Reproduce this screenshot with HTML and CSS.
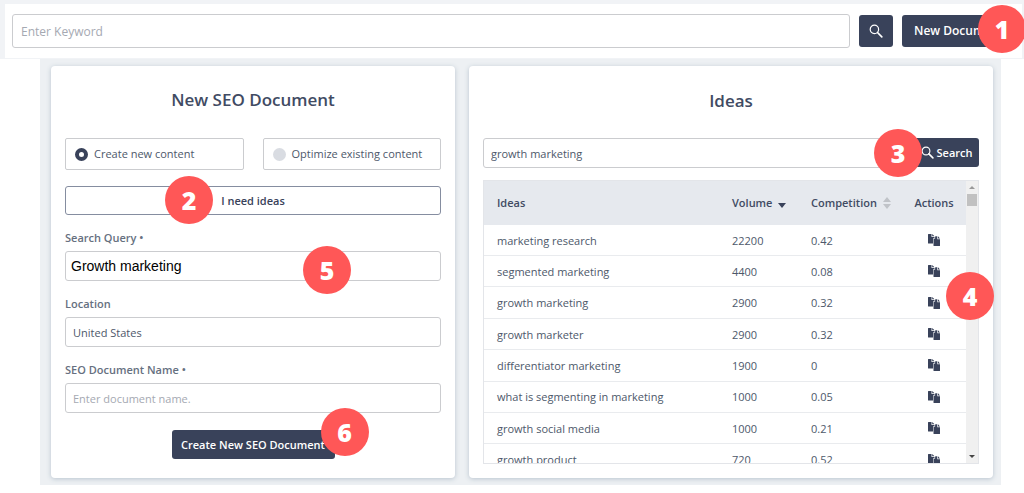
FILE: index.html
```html
<!DOCTYPE html>
<html lang="en">
<head>
<meta charset="utf-8">
<title>New SEO Document</title>
<link rel="stylesheet" href="styles.css">
</head>
<body>
<svg class="defs" width="0" height="0" aria-hidden="true">
  <symbol id="search" viewBox="0 0 14 14"><circle cx="5.4" cy="5.4" r="4.2" fill="none" stroke="currentColor" stroke-width="1.2"/><path d="M8.500 8.500l4.300 4.300" fill="none" stroke="currentColor" stroke-width="1.7" stroke-linecap="round"/></symbol>
  <symbol id="copy" viewBox="0 0 12 12"><path fill="currentColor" d="M0 .5Q0 0 .5 0H3.500V3H6.500V4.200H5.500Q5 4.200 5 4.700V9.500H.5Q0 9.500 0 9zM4.200 0l2.300 2.300H4.200zM5.500 5.300Q5.500 4.800 6 4.800H7.100V2.800Q7.100 2.300 7.600 2.300H9.300V5.200H12V11.500Q12 12 11.500 12H6Q5.500 12 5.500 11.500zM10 2.300L12 4.500H10z"/></symbol>
</svg>

<header class="topbar">
  <form class="topbar-inner">
    <input class="field keyword" type="text" placeholder="Enter Keyword" aria-label="Enter Keyword">
    <button class="btn icon-btn" type="button" aria-label="Search"><svg width="14" height="14"><use href="#search"/></svg></button>
    <div class="anchor">
      <button class="btn new-doc" type="button">New Document</button>
      <span class="badge badge-new">1</span>
    </div>
  </form>
</header>

<main class="stage">
  <section class="card card-form">
    <h1 class="title">New SEO Document</h1>
    <form class="form">
      <div class="choices">
        <label class="choice"><input class="radio" type="radio" name="mode" checked>Create new content</label>
        <label class="choice"><input class="radio" type="radio" name="mode">Optimize existing content</label>
      </div>
      <div class="anchor ideas-line">
        <button class="outline-btn" type="button">I need ideas</button>
        <span class="badge badge-ideas">2</span>
      </div>
      <div class="group anchor">
        <label class="label" for="query">Search Query •</label>
        <input class="field query" id="query" type="text" value="Growth marketing">
        <span class="badge badge-query">5</span>
      </div>
      <div class="group">
        <label class="label" for="location">Location</label>
        <input class="field" id="location" type="text" value="United States">
      </div>
      <div class="group">
        <label class="label" for="docname">SEO Document Name •</label>
        <input class="field" id="docname" type="text" placeholder="Enter document name.">
      </div>
      <div class="anchor submit">
        <button class="btn create" type="button">Create New SEO Document</button>
        <span class="badge badge-create">6</span>
      </div>
    </form>
  </section>

  <section class="card card-ideas">
    <h2 class="title">Ideas</h2>
    <form class="search-row">
      <input class="field idea-input" type="text" value="growth marketing" aria-label="Idea keyword">
      <div class="anchor">
        <button class="btn search-btn" type="button"><svg width="13" height="13"><use href="#search"/></svg>Search</button>
        <span class="badge badge-search">3</span>
      </div>
    </form>
    <div class="anchor">
      <div class="table-box">
        <table class="ideas">
          <thead>
            <tr><th class="c-idea">Ideas</th><th class="c-vol">Volume <svg class="sort" width="8" height="5"><path d="M0 0h8L4 5z" fill="#39425a"/></svg></th><th class="c-comp">Competition <svg class="sort-both" width="8" height="12"><path d="M0 5h8L4 0zM0 7h8l-4 5z" fill="#c0c3c8"/></svg></th><th class="c-act">Actions</th></tr>
          </thead>
          <tbody>
            <tr><td>marketing research</td><td>22200</td><td>0.42</td><td class="act"><button class="copy" type="button" aria-label="Copy"><svg width="12" height="12"><use href="#copy"/></svg></button></td></tr>
            <tr><td>segmented marketing</td><td>4400</td><td>0.08</td><td class="act"><button class="copy" type="button" aria-label="Copy"><svg width="12" height="12"><use href="#copy"/></svg></button></td></tr>
            <tr><td>growth marketing</td><td>2900</td><td>0.32</td><td class="act"><button class="copy" type="button" aria-label="Copy"><svg width="12" height="12"><use href="#copy"/></svg></button></td></tr>
            <tr><td>growth marketer</td><td>2900</td><td>0.32</td><td class="act"><button class="copy" type="button" aria-label="Copy"><svg width="12" height="12"><use href="#copy"/></svg></button></td></tr>
            <tr><td>differentiator marketing</td><td>1900</td><td>0</td><td class="act"><button class="copy" type="button" aria-label="Copy"><svg width="12" height="12"><use href="#copy"/></svg></button></td></tr>
            <tr><td>what is segmenting in marketing</td><td>1000</td><td>0.05</td><td class="act"><button class="copy" type="button" aria-label="Copy"><svg width="12" height="12"><use href="#copy"/></svg></button></td></tr>
            <tr><td>growth social media</td><td>1000</td><td>0.21</td><td class="act"><button class="copy" type="button" aria-label="Copy"><svg width="12" height="12"><use href="#copy"/></svg></button></td></tr>
            <tr><td>growth product</td><td>720</td><td>0.52</td><td class="act"><button class="copy" type="button" aria-label="Copy"><svg width="12" height="12"><use href="#copy"/></svg></button></td></tr>
          </tbody>
        </table>
        <div class="scrollbar" aria-hidden="true">
          <svg width="6" height="3"><path d="M0 3h6L3 0z" fill="#999"/></svg>
          <span class="thumb"></span>
          <svg class="down" width="6" height="3"><path d="M0 0h6L3 3z" fill="#444"/></svg>
        </div>
      </div>
      <span class="badge badge-table">4</span>
    </div>
  </section>
</main>
</body>
</html>
```
FILE: styles.css
```css
* { box-sizing: border-box; }

body {
  margin: 0;
  background: #fff;
  color: #4d586a;
  font: 11px/16px "Open Sans", "Noto Sans", sans-serif;
  overflow-x: hidden;
}

.defs { position: absolute; }

input, button { font: inherit; margin: 0; }
h1, h2 { margin: 0; }
svg { display: block; flex: none; }

.topbar {
  background: #f1f3f6;
  padding: 4px 2px 1px 5px;
}

.topbar-inner {
  display: flex;
  align-items: center;
  gap: 9px;
  padding: 10px 5px 10px 7px;
  background: #fff;
}

.anchor { position: relative; }

.field {
  width: 100%;
  min-width: 0;
  height: 30px;
  padding: 0 7px;
  border: 1px solid #cbcccf;
  border-radius: 3px;
  background: #fff;
  color: #4d586a;
  outline: 0;
}

.field::placeholder { color: #a5a9b2; opacity: 1; }

.keyword { flex: 1; height: 34px; padding: 0 8px; font-size: 12px; }

.btn {
  display: flex;
  align-items: center;
  justify-content: center;
  border: 0;
  border-radius: 3px;
  background: #39425a;
  color: #fff;
  font-weight: 600;
  white-space: nowrap;
}

.icon-btn { width: 34px; height: 32px; padding: 0; }
.new-doc { width: 115px; height: 32px; padding: 0 12px; font-size: 12px; justify-content: flex-start; }

.badge {
  position: absolute;
  z-index: 2;
  display: grid;
  place-items: center;
  width: 48px;
  height: 48px;
  border-radius: 50%;
  background: #ff5757;
  color: #fff;
  font-size: 25px;
  font-weight: 800;
  line-height: 48px;
}

.badge-new { right: -9px; top: -10px; }
.badge-ideas { left: 100px; top: -10px; }
.badge-query { left: 238px; top: 17px; }
.badge-create { right: -34px; top: -22px; }
.badge-search { right: 57px; top: -9px; }
.badge-table { right: -15px; top: 92px; }

.stage {
  display: grid;
  grid-template-columns: minmax(0, 404fr) minmax(0, 524fr);
  gap: 14px;
  margin: 0 23px 8px 40px;
  padding: 7px 8px 7px 11px;
  background: #edf0f3;
}

.card {
  padding: 24px 14px 14px;
  border-radius: 4px;
  background: #fff;
  box-shadow: 0 1px 5px #b9c4cf;
}

.title {
  height: 48px;
  color: #414b63;
  font-size: 17px;
  font-weight: 600;
  line-height: 20px;
  text-align: center;
}

.card-ideas .title { padding-top: 1px; }

.choices { display: grid; grid-template-columns: 1fr 1fr; gap: 19px; }

.choice {
  display: flex;
  align-items: center;
  gap: 6px;
  height: 32px;
  padding: 0 9px;
  border: 1px solid #cbcccf;
  border-radius: 2px;
  white-space: nowrap;
}

.radio {
  appearance: none;
  width: 13px;
  height: 13px;
  margin: 0;
  border-radius: 50%;
  background: #d9dce2;
}

.radio:checked { background: #fff; border: 4px solid #39425a; }

.ideas-line { margin-top: 16px; }

.outline-btn {
  width: 100%;
  height: 29px;
  padding: 0;
  border: 1px solid #858da0;
  border-radius: 3px;
  background: #fff;
  color: #39425a;
  font-weight: 600;
}

.group { margin-top: 14px; }

.label {
  display: block;
  height: 22px;
  color: #667080;
  font-weight: 600;
  line-height: 18px;
}

.query { padding: 0 5px; color: #000; font: 14px "Liberation Sans", Arial, sans-serif; }

.submit { width: 163px; margin: 17px auto 0; }
.create { width: 100%; height: 29px; padding: 0; }

.search-row { display: flex; margin-bottom: 12px; }
.idea-input { flex: 1; border-radius: 3px 0 0 3px; }
.search-btn { width: 65px; height: 29px; gap: 3px; padding: 0; border-radius: 0 3px 3px 0; }

.table-box {
  display: flex;
  align-items: flex-start;
  height: 284px;
  border: 1px solid #e3e5e9;
  overflow: hidden;
}

.ideas {
  flex: 1;
  min-width: 0;
  height: 295px;
  border-collapse: collapse;
  table-layout: fixed;
}

.ideas th, .ideas td {
  padding: 0 0 0 13px;
  text-align: left;
  white-space: nowrap;
}

.ideas th { height: 44px; background: #e6e9ee; color: #414b63; font-weight: 600; }
.ideas td { padding-top: 1px; border-bottom: 1px solid #e9ebee; }
.ideas .c-vol { width: 79px; }
.ideas .c-comp { width: 104px; }
.ideas .c-act { width: 64px; padding: 0; text-align: center; }
.ideas .act { padding: 0; }

.sort, .sort-both { display: inline-block; margin-left: 3px; }
.sort { vertical-align: -1px; }
.sort-both { vertical-align: -2px; }

.copy {
  display: block;
  margin: 0 auto;
  padding: 0;
  border: 0;
  background: none;
  color: #39425a;
}

.scrollbar {
  display: flex;
  flex-direction: column;
  align-items: center;
  gap: 5px;
  align-self: stretch;
  width: 12px;
  padding: 5px 0;
  background: #f0f0f0;
}

.thumb { width: 10px; height: 12px; background: #c1c1c1; }
.down { margin-top: auto; }
```
